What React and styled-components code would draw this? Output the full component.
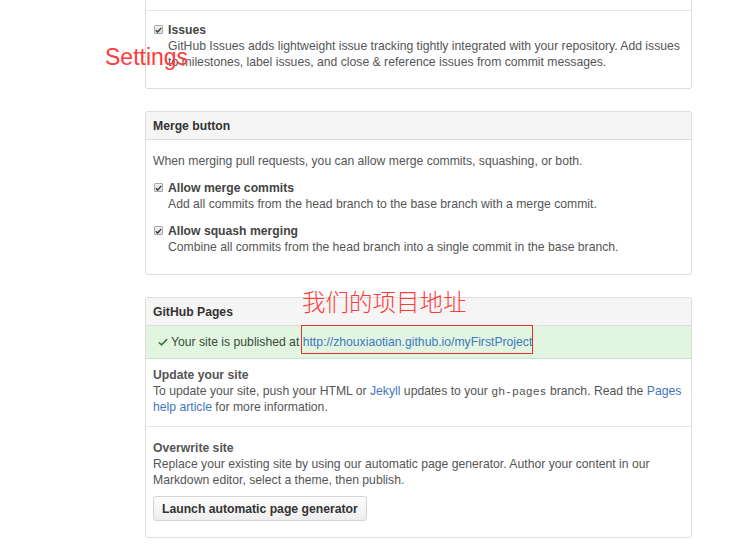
import styled, { createGlobalStyle } from "styled-components";

const GlobalStyle = createGlobalStyle`
  html, body { margin: 0; padding: 0; background: #fff; }
  body {
    font-family: "Liberation Sans", Arial, sans-serif;
    font-size: 12.2px;
    line-height: 16px;
    color: #555;
  }
`;

const Page = styled.div`
  position: relative;
  width: 744px;
  height: 555px;
  overflow: hidden;
  padding-left: 145px;
  box-sizing: border-box;
`;

const Column = styled.div`
  width: 547px;
  display: flex;
  flex-direction: column;
  gap: 22px;
`;

const Box = styled.div`
  border: 1px solid #ddd;
  border-top: ${(p) => (p.$cut ? "none" : "1px solid #ddd")};
  border-radius: ${(p) => (p.$cut ? "0 0 3px 3px" : "3px")};
  background: #fff;
`;

const BoxHeader = styled.div`
  padding: 6px 7px 5px;
  background: #f5f5f5;
  border-bottom: 1px solid #ddd;
  border-radius: 3px 3px 0 0;
  font-weight: bold;
  color: #333;
`;

const Section = styled.div`
  padding: ${(p) => p.$pad || "10px 7px"};
  border-top: ${(p) => (p.$divided ? "1px solid #e5e5e5" : "none")};
  min-height: ${(p) => p.$min || 0};
`;

const Para = styled.p`
  margin: 0 0 ${(p) => p.$after || 0};
`;

const Option = styled.div`
  display: grid;
  grid-template-columns: 15px 1fr;
  margin-bottom: ${(p) => p.$after || 0};
`;

const Check = styled.span`
  width: 7px;
  height: 7px;
  margin-top: 3px;
  margin-left: 1px;
  border: 1px solid #a8a8a8;
  border-radius: 1px;
  background: linear-gradient(#f2f2f2, #dcdcdc);
  display: flex;
  align-items: center;
  justify-content: center;
`;

const OptionTitle = styled.div`
  font-weight: bold;
  color: #444;
`;

const Flash = styled.div`
  padding: 8px 12px;
  background: #e1f5e1;
  border-bottom: 1px solid #c8e4c8;
  color: #3b4a3b;
  display: flex;
  align-items: center;
  gap: 3px;
`;

const SubTitle = styled.div`
  font-weight: bold;
  color: #555;
`;

const Link = styled.a`
  color: #4078c0;
  text-decoration: none;
`;

const Code = styled.code`
  font-family: "Liberation Mono", "DejaVu Sans Mono", monospace;
  font-size: 11.5px;
  line-height: 10px;
  color: #555;
`;

const Button = styled.button`
  margin-top: 8px;
  height: 25px;
  padding: 0 8px;
  border: 1px solid #d5d5d5;
  border-radius: 3px;
  background: linear-gradient(#fcfcfc, #eee);
  font-family: "Liberation Sans", Arial, sans-serif;
  font-size: 12.2px;
  font-weight: bold;
  color: #333;
`;

const Note = styled.span`
  position: absolute;
  left: ${(p) => p.$x}px;
  top: ${(p) => p.$y}px;
  color: #ff3b3b;
  font-size: ${(p) => p.$size}px;
  line-height: 1;
  white-space: nowrap;
  font-family: ${(p) =>
    p.$cjk
      ? '"Noto Sans CJK SC", sans-serif'
      : '"Liberation Sans", Arial, sans-serif'};
  font-weight: ${(p) => (p.$cjk ? 300 : 400)};
`;

const Frame = styled.span`
  position: absolute;
  left: 301px;
  top: 325px;
  width: 230px;
  height: 27px;
  border: 1px solid #e53030;
`;

function Tick() {
  return (
    <svg width="7" height="6" viewBox="0 0 7 6">
      <path d="M0.8 3.2 L2.7 5 L6.2 0.8" fill="none" stroke="#333" strokeWidth="1.3" />
    </svg>
  );
}

function CheckOption({ title, children, after }) {
  return (
    <Option $after={after}>
      <Check>
        <Tick />
      </Check>
      <div>
        <OptionTitle>{title}</OptionTitle>
        <div>{children}</div>
      </div>
    </Option>
  );
}

export default function App() {
  return (
    <>
      <GlobalStyle />
      <Page>
        <Column>
          <Box $cut>
            <Section $pad="0" $min="10px" />
            <Section $divided $pad="11px 7px 18px">
              <CheckOption title="Issues">
                GitHub Issues adds lightweight issue tracking tightly integrated with your
                repository. Add issues to milestones, label issues, and close &amp; reference
                issues from commit messages.
              </CheckOption>
            </Section>
          </Box>

          <Box>
            <BoxHeader>Merge button</BoxHeader>
            <Section $pad="13px 7px 19px">
              <Para $after="11px">
                When merging pull requests, you can allow merge commits, squashing, or both.
              </Para>
              <CheckOption title="Allow merge commits" after="11px">
                Add all commits from the head branch to the base branch with a merge commit.
              </CheckOption>
              <CheckOption title="Allow squash merging">
                Combine all commits from the head branch into a single commit in the base branch.
              </CheckOption>
            </Section>
          </Box>

          <Box>
            <BoxHeader>GitHub Pages</BoxHeader>
            <Flash>
              <svg width="10" height="10" viewBox="0 0 12 12">
                <path d="M1 6.5 L4.3 9.5 L11 2.5" fill="none" stroke="#3f7a3f" strokeWidth="2" />
              </svg>
              <span>
                Your site is published at{" "}
                <Link href="#">http://zhouxiaotian.github.io/myFirstProject</Link>
              </span>
            </Flash>
            <Section $pad="8px 7px 11px">
              <SubTitle>Update your site</SubTitle>
              <Para>
                To update your site, push your HTML or <Link href="#">Jekyll</Link> updates to
                your <Code>gh-pages</Code> branch. Read the{" "}
                <Link href="#">Pages help article</Link> for more information.
              </Para>
            </Section>
            <Section $divided $pad="13px 7px 16px">
              <SubTitle>Overwrite site</SubTitle>
              <Para>
                Replace your existing site by using our automatic page generator. Author your
                content in our Markdown editor, select a theme, then publish.
              </Para>
              <Button>Launch automatic page generator</Button>
            </Section>
          </Box>
        </Column>

        <Note $x={105} $y={46} $size={23}>
          Settings
        </Note>
        <Note $x={302} $y={290} $size={23.5} $cjk>
          我们的项目地址
        </Note>
        <Frame />
      </Page>
    </>
  );
}
